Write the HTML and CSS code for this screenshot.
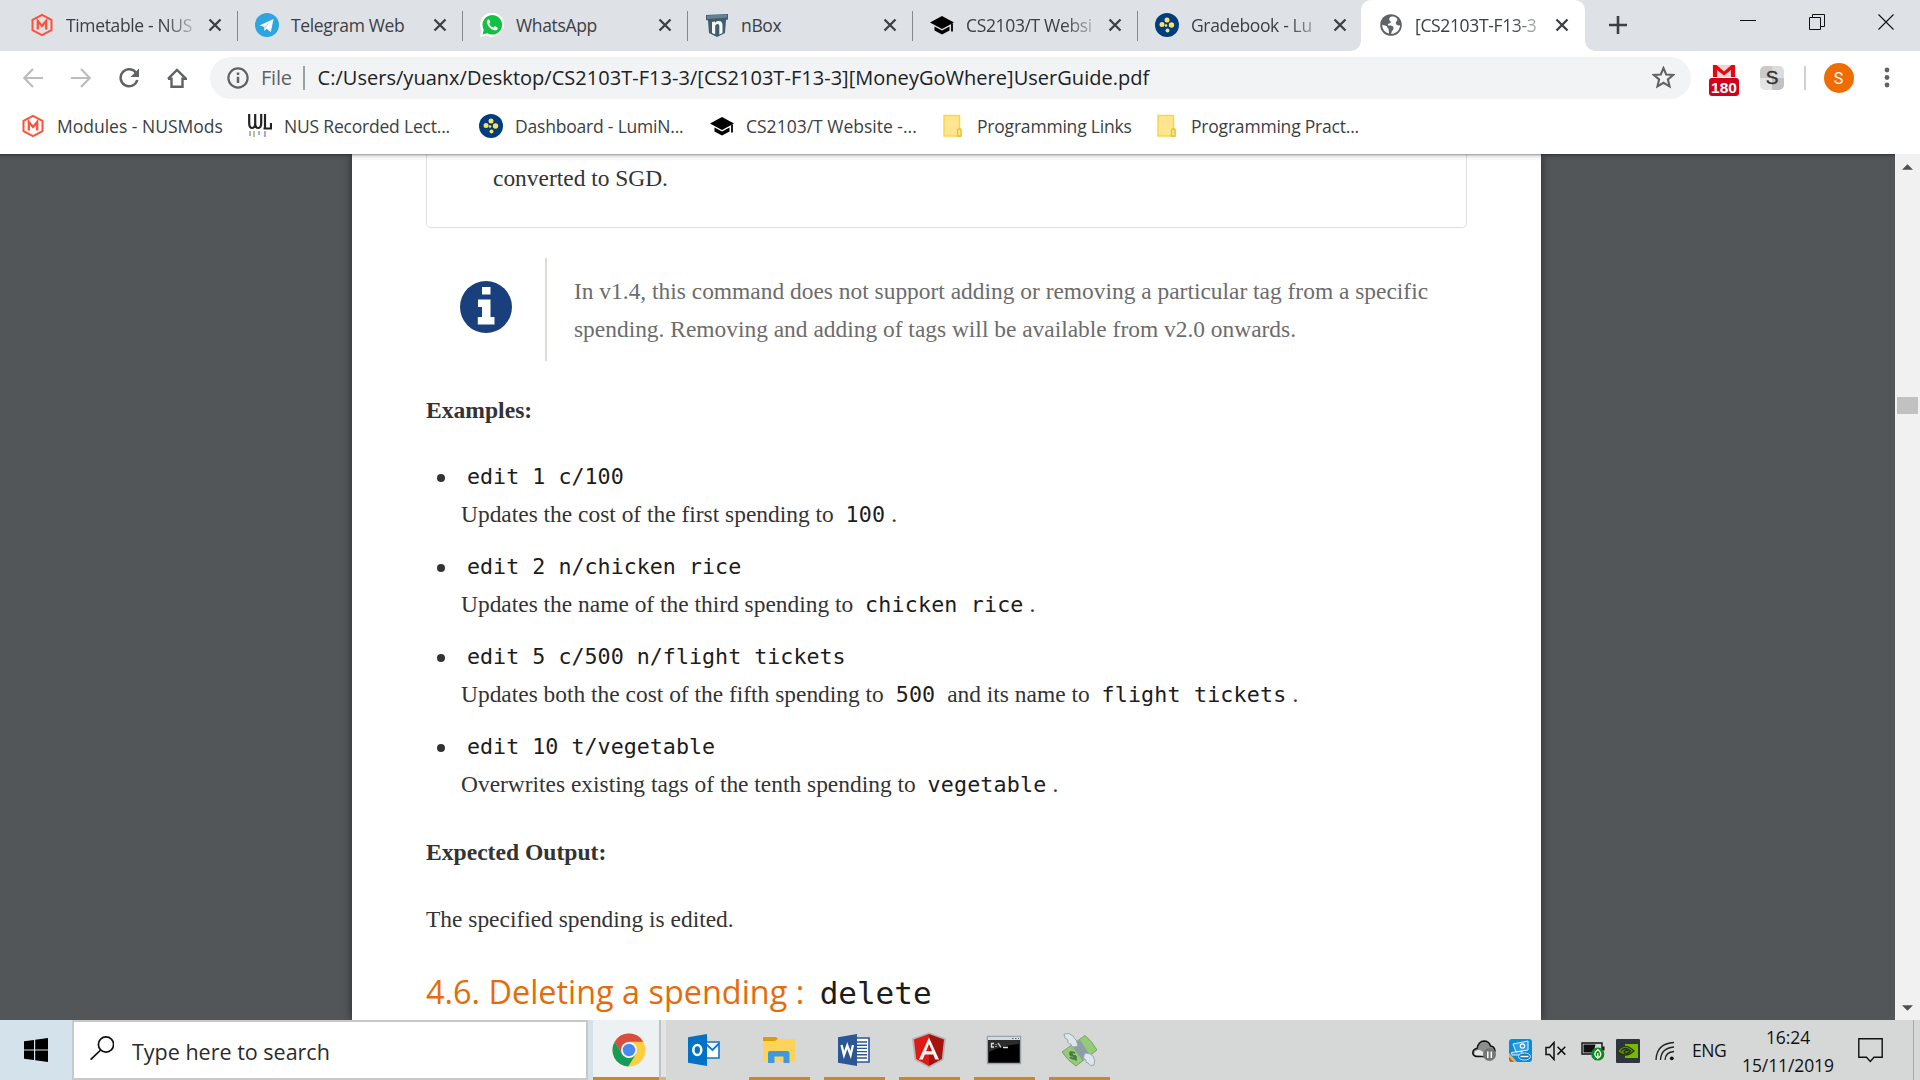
FILE: index.html
```html
<!DOCTYPE html>
<html lang="en">
<head>
<meta charset="utf-8">
<title>[CS2103T-F13-3][MoneyGoWhere]UserGuide.pdf</title>
<link rel="stylesheet" href="styles.css">
</head>
<body>
<svg class="defs" width="0" height="0">
  <defs>
    <symbol id="x" viewBox="0 0 16 16"><path d="M2.5 2.5l11 11M13.5 2.5l-11 11" stroke="#3c4043" stroke-width="2.3" fill="none"/></symbol>
    <symbol id="nusmods" viewBox="0 0 24 24"><path d="M12 1.8l9.5 5v10.4l-9.5 5-9.5-5V6.800z" fill="none" stroke="#ff5138" stroke-width="2" stroke-linejoin="round"/><path d="M7.800 16.500V8l4.200 5 4.200-5v8.500" fill="none" stroke="#ff5138" stroke-width="2.300"/></symbol>
    <symbol id="lumi" viewBox="0 0 24 24"><circle cx="12" cy="12" r="12" fill="#003d7c"/><g fill="#ffe066"><circle cx="12" cy="7" r="2.500"/><circle cx="7" cy="11.500" r="2.500"/><circle cx="16.500" cy="12" r="2.700"/><circle cx="12.500" cy="17.500" r="2"/><circle cx="11" cy="12.500" r="1.300"/></g></symbol>
    <symbol id="cap" viewBox="0 0 24 24"><path d="M12 3l12 6.500-12 6.500L0 9.500z"/><path d="M4.500 13.500v4L12 21.500l7.500-4v-4L12 17.500z"/><path d="M22 10.500v8" stroke="#000" stroke-width="1.800"/></symbol>
    <symbol id="folder" viewBox="0 0 20 24"><path d="M1 1.500h15.500v13.500h1.500v7H1z" fill="#ffe58f" stroke="#f9d649" stroke-width="1.500"/><path d="M14.500 22v-5.500q0-1.500 1.700-1.500t1.800 1.500V22z" fill="#ffe58f" stroke="#e8c22e" stroke-width="1.300"/></symbol>
  </defs>
</svg>

<header class="browser">
  <div class="tabstrip">
    <div class="tab"><svg class="fav"><use href="#nusmods"/></svg><span class="title fade">Timetable - NUS</span><svg class="close"><use href="#x"/></svg></div>
    <div class="tab"><svg class="fav" viewBox="0 0 24 24"><circle cx="12" cy="12" r="12" fill="#2ca5e0"/><path d="M4.500 12.500L18.500 6l-2.700 13-4.300-3.300-2.200 2.300-.3-4.300z" fill="#fff"/><path d="M9 13.700L15.500 8.500l-5 6.500-1.200 3z" fill="#c5dfef"/></svg><span class="title">Telegram Web</span><svg class="close"><use href="#x"/></svg></div>
    <div class="tab"><svg class="fav" viewBox="0 0 24 24"><path d="M0 24l1.600-6.300A12 12 0 1 1 6.500 22.400z" fill="#fff"/><path d="M2.500 21.500l1.300-4.800A9.800 9.800 0 1 1 7.400 20.300z" fill="#12c143"/><path d="M8.700 6.500c-1.500.3-2.200 2-1.600 3.800 1.200 3.700 4.200 6.400 7.600 7 1.700.2 3-.7 3.100-2.300 0-.7-2.600-2-3.100-1.800-.6.200-.9 1.400-1.500 1.300-1.500-.4-3.200-2-3.900-3.600-.2-.6 1-1.100 1-1.800 0-.6-.9-2.700-1.600-2.600z" fill="#fff"/></svg><span class="title">WhatsApp</span><svg class="close"><use href="#x"/></svg></div>
    <div class="tab"><svg class="fav" viewBox="0 0 24 24"><path d="M1 2l22-1v5.500l-2 .5-1 13-8 4-8-4L3 7.500 1 7z" fill="#3f5d6e"/><path d="M2 2.500l20-1v3L2 6z" fill="#67828f"/><path d="M7 20V9l3-.5v1.500c1-1.500 2.300-2 3.800-2 2.300 0 3.700 1.500 3.700 4v8l-3.200 1.500V13c0-1.300-.6-2-1.800-2-1.400 0-2.300 1-2.300 2.500v7.700z" fill="#f5f8fa"/></svg><span class="title">nBox</span><svg class="close"><use href="#x"/></svg></div>
    <div class="tab"><svg class="fav"><use href="#cap"/></svg><span class="title fade">CS2103/T Websi</span><svg class="close"><use href="#x"/></svg></div>
    <div class="tab last"><svg class="fav"><use href="#lumi"/></svg><span class="title fade">Gradebook - Lu</span><svg class="close"><use href="#x"/></svg></div>
    <div class="tab active"><svg class="fav" viewBox="0 0 24 24"><circle cx="12" cy="12" r="10.800" fill="#5f6368"/><path d="M13 3.500c-3 .5-3.500 3-1.800 4.500 1.200 1 .3 2.300-1 2.500-2 .2-1.500 2-.2 2 2.500 0 5 .5 4.500 3-.4 2-2 2-2.200 5.500 5-.5 8.700-4 8.700-8.700-2 .7-4-.3-4.200-2-.1-1.500 1.300-2 1.600-3.800.1-1.500-2.400-3-5.400-3z" fill="#fff"/><path d="M3.200 11.500c1.500 1.300 4.300.5 5 2.500.4 1.500 1.800 1.500 1.600 3.500-.1 1 .2 2 .3 3-4-.7-7-4.500-6.900-9z" fill="#fff"/></svg><span class="title fade">[CS2103T-F13-3</span><svg class="close"><use href="#x"/></svg></div>
    <svg class="newtab" viewBox="0 0 18 18"><path d="M9 0v18M0 9h18" stroke="#3c4043" stroke-width="2.600"/></svg>
    <div class="winctl">
      <svg width="16" height="16" viewBox="0 0 16 16"><path d="M0 6.500h16" stroke="#111"/></svg>
      <svg width="16" height="16" viewBox="0 0 16 16"><path d="M.5 3.500h11v12h-11zM3.500 3.500v-3h12v12h-4" fill="none" stroke="#111"/></svg>
      <svg width="16" height="16" viewBox="0 0 16 16"><path d="M.5.500l15 15M15.500.500l-15 15" fill="none" stroke="#111" stroke-width="1.100"/></svg>
    </div>
  </div>

  <div class="toolbar">
    <nav class="navbtns">
      <svg viewBox="0 0 20 20"><path d="M20 10H1.500M10 1L1.200 10l8.800 9" fill="none" stroke="#babcbe" stroke-width="2.200"/></svg>
      <svg viewBox="0 0 20 20"><path d="M0 10h18.500M10 1l8.800 9-8.800 9" fill="none" stroke="#babcbe" stroke-width="2.200"/></svg>
      <svg viewBox="0 0 20 20"><path d="M17.300 5.200A8.500 8.500 0 1 0 18.300 12" fill="none" stroke="#5f6368" stroke-width="2.500"/><path d="M20 .500v8.500h-8.500z" fill="#5f6368"/></svg>
      <svg viewBox="0 0 20 20"><path d="M4.500 9.500v9.200h11V9.500M1 10.800L10 2l9 8.800h-3.500M1 10.800h3.500" fill="none" stroke="#5f6368" stroke-width="2.400"/></svg>
    </nav>
    <div class="omnibox">
      <svg class="info" viewBox="0 0 22 22"><circle cx="11" cy="11" r="9.600" fill="none" stroke="#5f6368" stroke-width="2.200"/><path d="M11 9.800V16M11 5.500V8" stroke="#5f6368" stroke-width="2.500"/></svg>
      <span class="scheme">File</span><i class="sep"></i>
      <span class="url">C:/Users/yuanx/Desktop/CS2103T-F13-3/[CS2103T-F13-3][MoneyGoWhere]UserGuide.pdf</span>
      <svg class="star" viewBox="0 0 22 22"><path d="M11 2l2.600 6.100 6.600.5-5 4.300 1.600 6.500L11 16l-5.800 3.400 1.600-6.500-5-4.300 6.600-.5z" fill="none" stroke="#5f6368" stroke-width="2"/></svg>
    </div>
    <div class="ext gmail"><svg viewBox="0 0 24 13"><path d="M0 0h24v13H0z" fill="#f3d3d1"/><path d="M0 13V0h4l8 7 8-7h4v13h-4.500V5.500L12 11.500 4.500 5.500V13z" fill="#e00a12"/></svg><b>180</b></div>
    <div class="ext s">S</div>
    <i class="tsep"></i>
    <div class="avatar">S</div>
    <svg class="dots" viewBox="0 0 6 22"><g fill="#5f6368"><circle cx="3" cy="3" r="2.400"/><circle cx="3" cy="10.500" r="2.400"/><circle cx="3" cy="18" r="2.400"/></g></svg>
  </div>

  <div class="bookmarks">
    <span class="bm b1"><svg><use href="#nusmods"/></svg>Modules - NUSMods</span>
    <span class="bm b2"><svg viewBox="0 0 24 24"><path d="M1.200 0v9q0 5 3 5t3-5V0M7.200 3v6q0 5 3 5t3-5V0M17 0v14M15.500 14.500H24M23 9v6" fill="none" stroke="#222" stroke-width="2.200"/><path d="M2 17v5" stroke="#d9a2a2" stroke-width="2"/><path d="M6 17v6" stroke="#a9cc9a" stroke-width="2"/><path d="M11 17v4" stroke="#a7b3de" stroke-width="2"/><path d="M17 17v6" stroke="#c69ccc" stroke-width="2"/></svg>NUS Recorded Lect...</span>
    <span class="bm b3"><svg><use href="#lumi"/></svg>Dashboard - LumiN...</span>
    <span class="bm b4"><svg><use href="#cap"/></svg>CS2103/T Website -...</span>
    <span class="bm b5"><svg><use href="#folder"/></svg>Programming Links</span>
    <span class="bm b6"><svg><use href="#folder"/></svg>Programming Pract...</span>
  </div>
</header>

<main class="viewer">
  <article class="page">
    <div class="box">converted to SGD.</div>
    <div class="note">
      <div class="note-icon"><svg viewBox="0 0 52 52"><circle cx="26" cy="26" r="26" fill="#19407c"/><path d="M22 6h8.500v7.500H22zM18 18.500h12.500v17.500h4v7.500H17.800V36H22V26h-4z" fill="#fff"/></svg></div>
      <div class="note-text">In v1.4, this command does not support adding or removing a particular tag from a specific<br>spending. Removing and adding of tags will be available from v2.0 onwards.</div>
    </div>
    <p class="strong">Examples:</p>
    <ul>
      <li><code>edit 1 c/100</code><br>Updates the cost of the first spending to <code class="val">100</code>.</li>
      <li><code>edit 2 n/chicken rice</code><br>Updates the name of the third spending to <code class="val">chicken rice</code>.</li>
      <li><code>edit 5 c/500 n/flight tickets</code><br>Updates both the cost of the fifth spending to <code class="val">500</code> and its name to <code class="val">flight tickets</code>.</li>
      <li><code>edit 10 t/vegetable</code><br>Overwrites existing tags of the tenth spending to <code class="val">vegetable</code>.</li>
    </ul>
    <p class="strong">Expected Output:</p>
    <p>The specified spending is edited.</p>
    <h2>4.6. Deleting a spending : <code>delete</code></h2>
  </article>
  <div class="scrollbar">
    <svg class="up" viewBox="0 0 12 6"><path d="M0 6l6-6 6 6z" fill="#505050"/></svg>
    <i class="thumb"></i>
    <svg class="down" viewBox="0 0 12 6"><path d="M0 0l6 6 6-6z" fill="#505050"/></svg>
  </div>
</main>

<footer class="taskbar">
  <div class="start"><svg viewBox="0 0 24 24"><path d="M0 3.300L10 2v9.500H0zM11.200 1.800L24 0v11.500H11.200zM0 12.500h10V22L0 20.700zM11.200 12.500H24V24l-12.800-1.800z"/></svg></div>
  <div class="search"><svg viewBox="0 0 24 24"><circle cx="16" cy="8.500" r="7.600" fill="none" stroke="#111" stroke-width="1.700"/><path d="M10.700 14L.6 23.700" stroke="#111" stroke-width="1.700"/></svg>Type here to search</div>
  <div class="apps">
    <div class="app chrome"><svg viewBox="0 0 34 34"><circle cx="17" cy="17" r="16.500" fill="#ffcd40"/><path d="M31.300 8.700H17L10 21 2.700 8.700A16.500 16.500 0 0 1 31.300 8.700z" fill="#d94c41"/><path d="M2.700 8.700A16.500 16.500 0 0 0 16.200 33.500L24 21 17 25 10 21z" fill="#169b58"/><circle cx="17" cy="17" r="8" fill="#f4f7fa"/><circle cx="17" cy="17" r="6.200" fill="#4788f4"/></svg></div>
    <div class="edge"></div>
    <div class="app idle"><svg viewBox="0 0 32 32"><path d="M17 8h14v16H17z" fill="#fff" stroke="#0a79cb" stroke-width="1.600"/><path d="M18 10l6.500 6L31 9.500" fill="none" stroke="#0a79cb" stroke-width="1.800"/><path d="M0 3.200L19 0v32L0 28.800z" fill="#0072c6"/><ellipse cx="9.300" cy="16" rx="4" ry="5" fill="none" stroke="#fff" stroke-width="2.600"/></svg></div>
    <div class="app"><svg viewBox="0 0 32 32"><path d="M0 7V4q0-1 1-1h12l2 2-2 3z" fill="#dd9c04"/><path d="M0 7h12l2.500-2H31q1 0 1 1v21q0 1-1 1H1q-1 0-1-1z" fill="#ffd25a"/><path d="M5 29V19q0-2 2-2h17.500q2 0 2 2v10h-6v-6.500h-9V29z" fill="#3e9ade"/></svg></div>
    <div class="app"><svg viewBox="0 0 32 32"><path d="M17 4h14v24H17z" fill="#fff" stroke="#2b579a" stroke-width="1.600"/><path d="M19 8h10M19 11.200h10M19 14.400h10M19 17.600h10M19 20.800h10M19 24h10" stroke="#2b579a" stroke-width="1.400"/><path d="M0 3.200L19 0v32L0 28.800z" fill="#2b5797"/><path d="M3.500 11l2.500 10 3.300-9.500L12.600 21 15 11" fill="none" stroke="#fff" stroke-width="2.300"/></svg></div>
    <div class="app"><svg class="w36" viewBox="0 0 36 36"><path d="M18 .5L35 6.500 32.400 28 18 35.800 3.600 28 1 6.500z" fill="#b3b3b3"/><path d="M18 2L33 7.500 30.800 27 18 34z" fill="#a6120d"/><path d="M18 2L3 7.500 5.200 27 18 34z" fill="#dd1b16"/><path d="M18 5.500L8 27.500h3.800l2-5h8.400l2 5H28zM18 12l3 7.300h-6z" fill="#f4f4f4" fill-rule="evenodd"/></svg></div>
    <div class="app"><svg class="w36" viewBox="0 0 36 36"><path d="M1.500 4.500h33v27h-33z" fill="#000" stroke="#9aa2ab" stroke-width="1.500"/><path d="M2 5h32v3H2z" fill="#d3dbe4"/><path d="M3 8h30v4Q14 14 3 20z" fill="#2c2c2c"/><path d="M8 11.500H5.500V15H8M10 12v.8M10 14v1M12 11l3 4.500M17 15.500h5" stroke="#ddd" fill="none" stroke-width="1.300"/><path d="M26 6.500h1.500M29 6.500h1.500M32 6.500h1" stroke="#667"/></svg></div>
    <div class="app"><svg class="w36" viewBox="0 0 36 36"><path d="M1 20L24 3.500Q31 9 36 18L15 34Q7 29 1 20z" fill="#93cc76" stroke="#7fa06d"/><path d="M11 14l8-6L29 23l-7.500 5.500z" fill="#8d9ea8"/><path d="M3 2Q8 0 12 4q4 4 5 10l-4 1Q10 15 10 12 6 12 7 8 3 7 3 2z" fill="#dce6ec" stroke="#9aa8b0"/><path d="M24 21q5 0 8 3 3 5 1 9-4 2-6-2-3 0-2-3-4-1-1-7z" fill="#dce6ec" stroke="#9aa8b0"/><path d="M14 21q-5-2-5 1c0 3 7 0 6 4-1 2-5 0-6-1M9 19.500l6.500 9" stroke="#4a7a46" stroke-width="1.800" fill="none"/></svg></div>
  </div>
  <div class="tray">
    <svg class="t1" width="24" height="22" viewBox="0 0 24 22"><path d="M4 16.500Q.7 15.500.8 12.500 1.200 9 5 8.500 6.500 1.200 12 1q5 0 6.500 5 4 .2 4.500 5l-3 5.500z" fill="#8d8d8d" stroke="#111" stroke-width="1.500"/><path d="M3 15Q1 11 6 10q4-1 8 6z" fill="#e6e6e6"/><circle cx="17.500" cy="14.500" r="6.500" fill="#757575"/><path d="M15.800 11.500v6.500M19.300 11.500v6.500" stroke="#fff" stroke-width="1.500"/></svg>
    <svg class="t2" width="23" height="23" viewBox="0 0 23 23"><rect width="23" height="23" rx="3" fill="#0c8bdc"/><path d="M0 14l8 9H3q-3 0-3-3z" fill="#e7b54b"/><path d="M0 18l5 5H3q-3 0-3-3z" fill="#d05a36"/><path d="M4 5l15-3v9L7 13zM2.500 13.500L13 12v4H3z" fill="#2d9fe4" stroke="#dff2fd" stroke-width="1"/><circle cx="13.500" cy="7" r="2.200" fill="none" stroke="#fff" stroke-width="1.200"/><ellipse cx="15.500" cy="17.500" rx="6" ry="3.500" fill="#0b76c2" stroke="#cbe9fb"/><path d="M11.500 17.500h8" stroke="#fff" stroke-width="1.500"/></svg>
    <svg class="t3" width="21" height="20" viewBox="0 0 21 20"><path d="M1 6.500h3.500L9 1.500v17l-4.500-5H1z" fill="none" stroke="#111" stroke-width="1.500"/><path d="M12.500 5.800l7.800 7.800M20.300 5.800l-7.800 7.800" stroke="#111" stroke-width="1.500"/></svg>
    <svg class="t4" width="24" height="21" viewBox="0 0 24 21"><path d="M1 3h20v11H1z" fill="none" stroke="#111" stroke-width="1.400"/><path d="M2.500 4.500h12l-2 8h-10zM21.500 6.500h2v4h-2z" fill="#111"/><circle cx="16.800" cy="14" r="6.600" fill="#0c8a1c"/><path d="M16.800 9.500q6 5 0 8.500-6-3.500 0-8.500zM16.800 13v6" fill="none" stroke="#fff" stroke-width="1.300"/></svg>
    <svg class="t5" width="24" height="24" viewBox="0 0 24 24"><rect width="24" height="24" rx="1" fill="#30353d"/><path d="M9 5h13v14H9z" fill="#76b900"/><path d="M1.500 12Q9 2.500 18 12 9 20 1.500 12z" fill="#5d9108" stroke="#263510" stroke-width="1.200"/><path d="M5 12Q9 7 14.500 12 10 16.500 8 13q2-3 4-1" fill="none" stroke="#263510" stroke-width="1.400"/></svg>
    <svg class="t6" width="20" height="20" viewBox="0 0 20 20"><path d="M1 19Q1.500 2.500 19 1.500M5.500 19Q6 7 19 6M10 19q.5-8 9-8.500" fill="none" stroke="#222" stroke-width="1.300"/><circle cx="16.800" cy="17.300" r="1.900" fill="#111"/></svg>
    <span class="lang">ENG</span>
    <div class="clock"><span>16:24</span><span>15/11/2019</span></div>
    <svg class="t7" width="25" height="25" viewBox="0 0 25 25"><path d="M.8.800h23.400v18.500h-8.200l-3.700 4.200-3.800-4.200H.8z" fill="none" stroke="#111" stroke-width="1.400"/></svg>
    <i class="peek"></i>
  </div>
</footer>
</body>
</html>
```
FILE: styles.css
```css
* { box-sizing: border-box; }
body {
  margin: 0;
  width: 1920px;
  height: 1080px;
  overflow: hidden;
  display: flex;
  flex-direction: column;
  font-family: "Open Sans", sans-serif;
  color: #3c4043;
  background: #fff;
}
svg { display: block; flex: none; }
.defs { position: absolute; }

/* Browser chrome */
.browser { flex: none; height: 154px; background: #fff; }
.tabstrip { display: flex; height: 51px; background: #dee1e6; padding-left: 13px; }
.tab {
  position: relative;
  flex: none;
  width: 225px;
  height: 51px;
  display: flex;
  align-items: center;
  padding: 0 16px 2px 17px;
  font-size: 17.5px;
  letter-spacing: -0.35px;
}
.tab:not(.active):not(.last)::after {
  content: "";
  position: absolute;
  right: 0;
  top: 11px;
  width: 1.5px;
  height: 30px;
  background: #85888c;
}
.fav { width: 24px; height: 24px; margin-right: 12px; }
.title {
  flex: none;
  width: 132px;
  margin-right: 9px;
  line-height: 26px;
  white-space: nowrap;
}
.fade {
  -webkit-mask-image: linear-gradient(90deg, #000 98px, rgba(0,0,0,.15) 131px);
  mask-image: linear-gradient(90deg, #000 98px, rgba(0,0,0,.15) 131px);
}
.close { width: 16px; height: 16px; margin-top: 1px; }
.tab.active {
  background: #fff;
  width: 224px;
  margin-left: -2px;
  padding-left: 18px;
  margin-right: 24px;
  border-radius: 10px 10px 0 0;
}
.tab.active .title { margin-right: 7px; }
.tab.active::before, .tab.active::after {
  content: "";
  position: absolute;
  bottom: 0;
  width: 10px;
  height: 10px;
}
.tab.active::before { left: -10px; background: radial-gradient(circle at 0 0, transparent 9.5px, #fff 10px); }
.tab.active::after { right: -10px; background: radial-gradient(circle at 100% 0, transparent 9.5px, #fff 10px); }
.newtab { width: 18px; height: 18px; margin: 16px 0 0; }
.winctl { display: flex; gap: 53px; margin: 14px 0 0 113px; }

.toolbar { display: flex; align-items: center; height: 53px; padding: 0 0 0 23px; }
.navbtns { display: flex; gap: 28px; width: 187px; }
.navbtns svg { width: 20px; height: 20px; }
.omnibox {
  width: 1481px;
  height: 42px;
  border-radius: 21px;
  background: #f1f3f4;
  display: flex;
  align-items: center;
  padding: 0 16px 0 17px;
  font-size: 20px;
  color: #202124;
}
.info { width: 22px; height: 22px; margin-right: 12px; }
.scheme { color: #5f6368; width: 42px; letter-spacing: -0.2px; }
.sep { width: 1.5px; height: 24px; background: #9aa0a6; margin-right: 13px; }
.url { flex: 1; white-space: nowrap; letter-spacing: 0.03px; }
.star { width: 23px; height: 23px; }
.gmail { width: 30px; height: 38px; margin: 5px 0 0 18px; display: flex; flex-direction: column; align-items: center; }
.gmail svg { width: 24px; height: 12px; margin: 4px 0 1px; }
.gmail b {
  width: 30px;
  height: 18px;
  border-radius: 3px;
  background: #d0021b;
  color: #fff;
  font: bold 15.5px/20px "Liberation Sans", sans-serif;
  text-align: center;
}
.s {
  width: 24px;
  height: 24px;
  margin-left: 21px;
  border-radius: 5px;
  background: conic-gradient(#dcdcdc 25%, #c2c2c2 0 50%, #e4e4e4 0 75%, #cacaca 0);
  color: #333;
  font: 19px/24px "Liberation Sans", sans-serif;
  -webkit-text-stroke: 0.4px #333;
  text-align: center;
}
.tsep { width: 1.5px; height: 24px; background: #cdd0d4; margin-left: 20px; }
.avatar {
  width: 30px;
  height: 30px;
  margin-left: 18px;
  border-radius: 50%;
  background: #ef6c00;
  color: #fff;
  font: 16px/31px Roboto, sans-serif;
  text-align: center;
}
.dots { width: 6px; height: 22px; margin-left: 30px; }

.bookmarks { display: grid; grid-template-columns: 227px 231px 231px 233px 214px 1fr; height: 44px; padding-left: 21px; }
.bm { display: flex; align-items: center; height: 43px; font-size: 17.5px; letter-spacing: -0.2px; white-space: nowrap; }
.bm svg { width: 24px; height: 24px; margin: 1px 12px 0 0; }
.b1 { letter-spacing: 0; }
.b4 { letter-spacing: 0; }
.b5 svg, .b6 svg { width: 20px; height: 24px; margin-right: 14px; }

/* PDF viewer */
.viewer {
  position: relative;
  height: 866px;
  flex: none;
  display: flex;
  overflow: hidden;
  background: #525659;
  padding-left: 352px;
}
.viewer::before {
  content: "";
  position: absolute;
  z-index: 2;
  left: 0;
  top: 0;
  width: 1895px;
  height: 7px;
  background: linear-gradient(rgba(0,0,0,.38), rgba(0,0,0,.12) 2px, rgba(0,0,0,.04) 4px, transparent);
}
.page {
  width: 1189px;
  height: 866px;
  margin-right: 354px;
  padding: 0 74px;
  background: #fff;
  box-shadow: 0 0 8px rgba(0,0,0,.55);
  font-family: "Liberation Serif", serif;
  font-size: 23.43px;
  line-height: 37.5px;
  color: #333;
}
.box {
  height: 74px;
  padding: 6px 0 0 66px;
  border: 1.5px solid #e0e0dc;
  border-top: 0;
  border-radius: 0 0 5px 5px;
}
.note { display: flex; height: 103px; margin: 30px 0 31px; }
.note-icon { width: 121px; padding: 23px 0 0 33.5px; border-right: 2px solid #ddddd8; }
.note-icon svg { width: 52px; height: 52px; }
.note-text { padding: 15px 0 0 27px; color: #6c6c6c; white-space: nowrap; }
p { margin: 0 0 29.5px; }
p.strong { font-weight: bold; font-size: 23.6px; }
ul { margin: -1px 0 31px; padding: 0 0 0 35px; list-style: none; }
li { position: relative; margin-bottom: 15px; white-space: nowrap; }
li::before {
  content: "";
  position: absolute;
  left: -24px;
  top: 16px;
  width: 8px;
  height: 8px;
  border-radius: 50%;
  background: #333;
}
code {
  font-family: "DejaVu Sans Mono", monospace;
  font-size: 21.7px;
  line-height: 1;
  padding: 0 6px;
  color: #1c1c1c;
}
.val { letter-spacing: 0.15px; }
h2 {
  margin: 30px 0 0;
  font: 32.4px/44px "Open Sans", sans-serif;
  color: #e46c0a;
  white-space: nowrap;
}
h2 code { font-size: 31px; padding: 0 7px; }

.scrollbar { flex: 1; background: #f1f1f1; padding-top: 10px; display: flex; flex-direction: column; align-items: center; }
.scrollbar svg { width: 11px; height: 6px; }
.thumb { width: 21px; height: 17px; background: #c1c1c1; margin: 227px 0 591px; }

/* Windows taskbar */
.taskbar { flex: none; height: 60px; display: flex; background: #d6d7d7; color: #111; }
.start { width: 72px; background: #d4e3eb; padding: 18px 0 0 24px; }
.start svg { width: 24px; height: 24px; }
.search {
  width: 516px;
  border: 2px solid #c8c8c8;
  background: #fff;
  display: flex;
  align-items: center;
  padding: 3px 0 0 16px;
  font-size: 21.5px;
  color: #2b2b2b;
}
.search svg { width: 24px; height: 24px; margin: -8px 18px 0 0; }
.apps { display: flex; gap: 14px; border-left: 5px solid #d3e2e9; }
.app { width: 61px; height: 60px; padding: 14px 2px 0 0; display: flex; justify-content: center; border-bottom: 3px solid #c8872d; }
.app svg { width: 32px; height: 32px; }
.app .w36 { width: 36px; height: 36px; margin-top: -2px; }
.app.idle { border-bottom-color: transparent; }
.app.chrome { width: 66px; background: #edf1f3; padding-top: 13px; padding-right: 0; margin-right: -14px; }
.app.chrome svg { width: 34px; height: 34px; margin-left: 5px; }
.edge { width: 7px; border-left: 2px solid #bfc2c4; border-bottom: 3px solid #dcb27d; background: #e2e4e5; margin-right: -6px; }
.tray { flex: 1; display: flex; align-items: center; justify-content: flex-end; font-size: 17.5px; letter-spacing: -0.4px; }
.tray svg { margin-top: 1px; }
.t1 { margin-right: 13px; }
.t2 { margin-right: 13px; }
.t3 { margin-right: 15px; }
.t4 { margin-right: 11px; }
.t5 { margin-right: 15px; }
.t6 { margin-right: 17px; }
.lang { width: 50px; }
.clock { width: 92px; text-align: center; line-height: 28px; display: flex; flex-direction: column; white-space: nowrap; letter-spacing: -0.1px; margin-top: 1px; }
.t7 { margin-left: 24px; }
.peek { width: 7px; height: 60px; margin-left: 30px; border-left: 1.5px solid #a8a8a8; }
```
